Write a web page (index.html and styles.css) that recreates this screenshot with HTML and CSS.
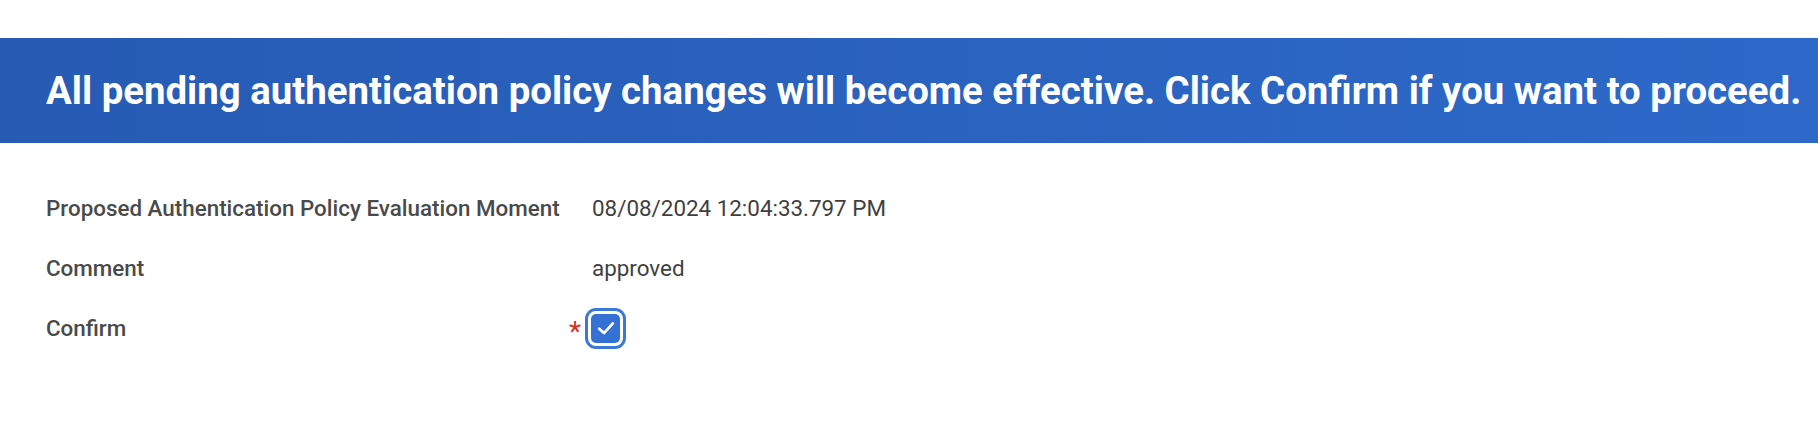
FILE: index.html
```html
<!DOCTYPE html>
<html lang="en">
<head>
<meta charset="utf-8">
<title>Confirm</title>
<link rel="stylesheet" href="styles.css">
</head>
<body>
<header class="banner">
  <h1 class="banner-title">All pending authentication policy changes will become effective. Click Confirm if you want to proceed.</h1>
</header>
<main class="form">
  <div class="label">Proposed Authentication Policy Evaluation Moment</div>
  <div class="value">08/08/2024 12:04:33.797 PM</div>
  <div class="label">Comment</div>
  <div class="value">approved</div>
  <div class="label">Confirm</div>
  <div class="check-cell">
    <span class="required">*</span>
    <div class="checkbox">
      <svg viewBox="0 0 20 20" width="22" height="22" aria-hidden="true"><path d="M3.8 10.6 L8.2 14.6 L16.2 5.8" fill="none" stroke="#fff" stroke-width="2.5" stroke-linecap="round" stroke-linejoin="round"/></svg>
    </div>
  </div>
</main>
</body>
</html>
```
FILE: styles.css
```css
html, body {
  margin: 0;
  padding: 0;
  background: #ffffff;
  font-family: Roboto, "Liberation Sans", sans-serif;
}

body {
  min-height: 432px;
}

.banner {
  margin-top: 38px;
  height: 105px;
  box-sizing: border-box;
  padding-left: 46px;
  display: flex;
  align-items: center;
  background: linear-gradient(90deg, #275bb4 0%, #2a62bf 50%, #2e69c9 100%);
}

.banner-title {
  margin: 0;
  color: #ffffff;
  font-size: 38.4px;
  font-weight: 700;
  line-height: 46px;
  white-space: nowrap;
}

.form {
  display: grid;
  grid-template-columns: 546px auto;
  grid-auto-rows: 30px;
  row-gap: 30px;
  align-items: center;
  padding: 50px 0 60px 46px;
}

.label {
  font-size: 22.4px;
  font-weight: 500;
  color: #4a4a4a;
  line-height: 30px;
}

.value {
  font-size: 22.4px;
  font-weight: 400;
  color: #3f3f3f;
  line-height: 30px;
}

.check-cell {
  display: flex;
  align-items: center;
  height: 30px;
  margin-left: -23px;
}

.required {
  flex: none;
  color: #d93025;
  font-size: 28px;
  font-weight: 400;
  line-height: 20px;
  width: 16px;
  margin-top: 8px;
}

.checkbox {
  flex: none;
  width: 29px;
  height: 29px;
  margin-left: 6px;
  background: #3571d4;
  border-radius: 5px;
  box-shadow: 0 0 0 3px #ffffff, 0 0 0 6px #3c78d8;
  display: flex;
  align-items: center;
  justify-content: center;
}
```
